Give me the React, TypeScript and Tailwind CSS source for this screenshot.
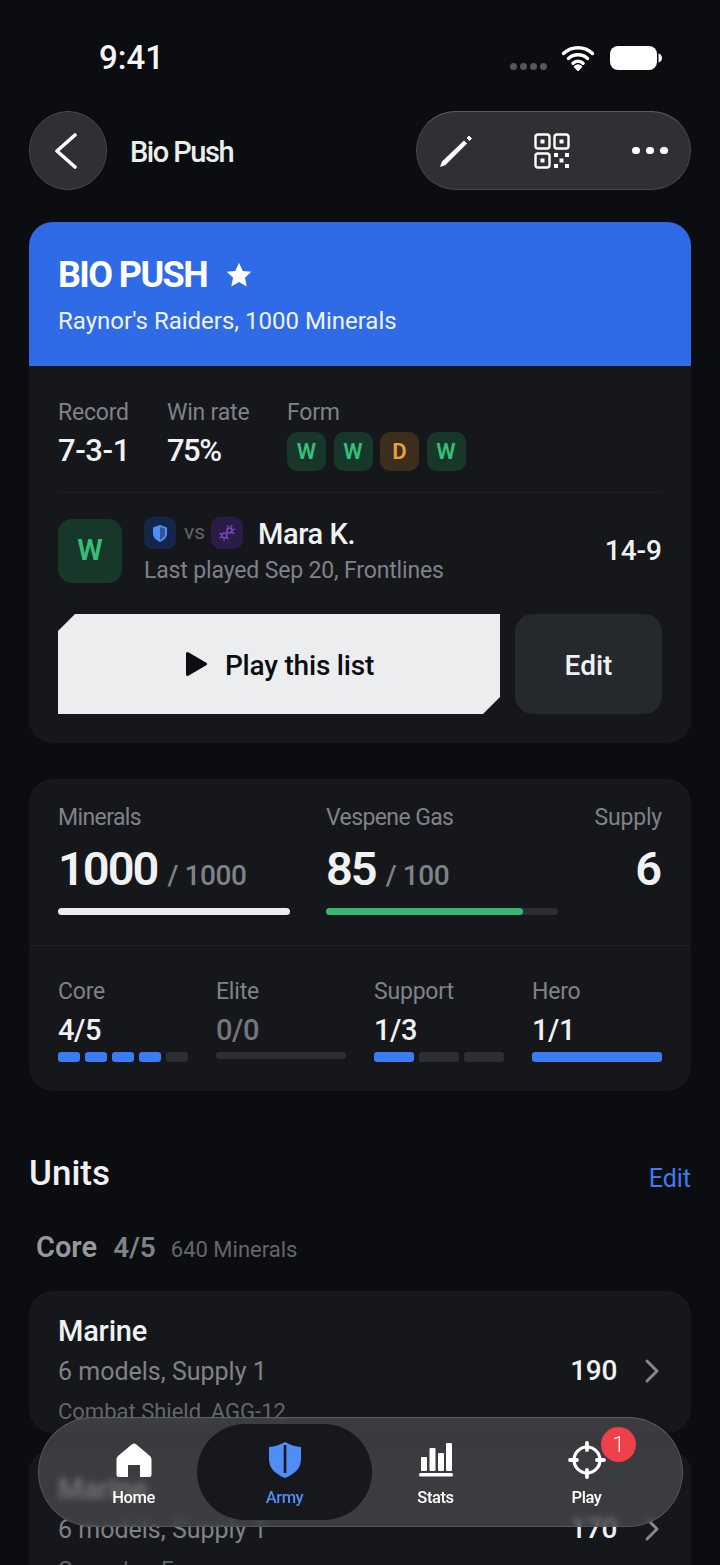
import { ChevronRight } from 'lucide-react';

const font = { fontFamily: 'Roboto, "Noto Sans", sans-serif' };

function Label({ children, className = '' }: { children: React.ReactNode; className?: string }) {
  return <div className={`text-[23px] leading-[28px] text-[#7f8288] ${className || 'tracking-[-0.2px]'}`}>{children}</div>;
}

function FormBadge({ result }: { result: 'W' | 'D' }) {
  const color = result === 'W' ? 'bg-[#17372b] text-[#35c078]' : 'bg-[#3b2e1c] text-[#e8a33d]';
  return (
    <div className={`flex h-[39px] w-[39px] items-center justify-center rounded-[10px] text-[22px] font-semibold ${color}`}>
      {result}
    </div>
  );
}

function Limit({ label, value, total, filled, muted }: { label: string; value: string; total: number; filled: number; muted?: boolean }) {
  return (
    <div className="w-[130px]">
      <Label>{label}</Label>
      <div className={`mt-[8px] text-[29px] leading-[32px] font-medium tracking-[-0.4px] ${muted ? 'text-[#73767c]' : 'text-[#f0f1f3]'}`}>{value}</div>
      {total === 0 ? (
        <div className="mt-[6px] h-[7px] rounded-[3px] bg-[#2c2e33]" />
      ) : (
        <div className="mt-[6px] flex h-[10px] gap-[4.5px]">
          {Array.from({ length: total }).map((_, i) => (
            <div key={i} className={`flex-1 rounded-[3px] ${i < filled ? 'bg-[#3b7bf6]' : 'bg-[#2c2e33]'}`} />
          ))}
        </div>
      )}
    </div>
  );
}

function UnitCard({ name, detail, gear, cost }: { name: string; detail: string; gear: string; cost: string }) {
  return (
    <div className="flex items-center justify-between rounded-[24px] bg-[#15171b] px-[29px] pt-[24px] pb-[5px]">
      <div>
        <div className="text-[29px] leading-[32px] font-medium tracking-[-0.2px] text-[#f0f1f3]">{name}</div>
        <div className="mt-[9px] text-[25px] leading-[32px] text-[#7f8288]">{detail}</div>
        <div className="mt-[8px] text-[22px] leading-[32px] text-[#63666c]">{gear}</div>
      </div>
      <div className="mb-[1px] flex items-center gap-[15px]">
        <span className="text-[28px] font-medium tracking-[-0.3px] text-[#f0f1f3]">{cost}</span>
        <ChevronRight size={40} strokeWidth={1.8} className="mr-[-10px] text-[#85888d]" />
      </div>
    </div>
  );
}

function NavItem({ label, active, children }: { label: string; active?: boolean; children: React.ReactNode }) {
  return (
    <div className={`flex w-[151px] flex-col items-center ${active ? 'text-[#4f8ef7]' : 'text-white'}`}>
      <div className="flex h-[40px] items-center justify-center">{children}</div>
      <span className="mt-[7px] text-[16.5px] leading-[22px] font-medium tracking-[-0.4px]">{label}</span>
    </div>
  );
}

export default function App() {
  return (
    <div style={font} className="relative h-[1565px] w-[720px] overflow-hidden bg-[#0c0d10] text-white">
      {/* status bar */}
      <div className="flex h-[111px] items-start justify-between pt-[40px] pr-[58px] pl-[99px]">
        <span className="text-[33px] leading-[36px] font-medium text-[#f5f5f5]">9:41</span>
        <div className="flex items-center pt-[4px]">
          <div className="mt-[16px] mr-[14px] flex gap-[3px]">
            {[0, 1, 2, 3].map((i) => (
              <div key={i} className="h-[7px] w-[7px] rounded-full bg-[#55575b]" />
            ))}
          </div>
          <svg width="34" height="28" viewBox="0 0 34 28" className="mr-[15px]">
            <path d="M2.500 9.500a21 21 0 0 1 29 0M7.500 14.500a14 14 0 0 1 19 0M12 19.200a7 7 0 0 1 10 0" fill="none" stroke="white" strokeWidth="3.400" strokeLinecap="round" />
            <path d="M17 27l-4-4.400a5.500 5.500 0 0 1 8 0z" fill="white" stroke="white" strokeLinejoin="round" />
          </svg>
          <svg width="52" height="24" viewBox="0 0 52 24">
            <rect x="0" y="0" width="47" height="24" rx="8" fill="white" />
            <path d="M48.500 7.500c2 .5 3.500 2.200 3.500 4.500s-1.500 4-3.500 4.500z" fill="white" />
          </svg>
        </div>
      </div>

      {/* top bar */}
      <div className="flex h-[79px] items-center justify-between px-[29px]">
        <div className="flex items-center gap-[23px]">
          <div className="flex h-[79px] w-[78px] items-center justify-center rounded-full border border-[#46484c] bg-[#2f3034]">
            <svg width="24" height="36" viewBox="0 0 24 36" fill="none" stroke="white" strokeWidth="3.600" strokeLinecap="round" strokeLinejoin="round" className="mr-[4px]">
              <path d="M21 2L3 18l18 16" />
            </svg>
          </div>
          <span className="pt-[2px] text-[29px] leading-[34px] font-medium tracking-[-1.5px] text-[#eceded]">Bio Push</span>
        </div>
        <div className="flex h-[79px] w-[275px] items-center rounded-full border border-[#46484c] border-t-[#5b5d60] bg-[#2f3034] pl-[22px]">
          <svg width="34" height="34" viewBox="0 0 34 34" fill="white">
            <path d="M1 33l2-5.500L25 6.500l3 3L6.500 31z" />
            <path d="M28 4l2-2 2.500 2.500-2 2z" stroke="white" strokeWidth="1" strokeLinejoin="round" />
          </svg>
          <svg width="36" height="36" viewBox="0 0 36 36" fill="none" stroke="white" strokeWidth="2.400" className="ml-[61px]">
            <rect x="1.500" y="1.500" width="14" height="14" rx="2.500" />
            <rect x="20.500" y="1.500" width="14" height="14" rx="2.500" />
            <rect x="1.500" y="20.500" width="14" height="14" rx="2.500" />
            <rect x="6.500" y="6.500" width="4" height="4" fill="white" stroke="none" />
            <rect x="25.500" y="6.500" width="4" height="4" fill="white" stroke="none" />
            <rect x="6.500" y="25.500" width="4" height="4" fill="white" stroke="none" />
            <path d="M20 20h4v4h-4zM31 20h4v4h-4zM25.500 25.500h4v4h-4zM20 31h4v4h-4zM31 31h4v4h-4z" fill="white" stroke="none" />
          </svg>
          <div className="ml-[62px] flex gap-[6.500px]">
            <div className="h-[7.500px] w-[7.500px] rounded-full bg-white" />
            <div className="h-[7.500px] w-[7.500px] rounded-full bg-white" />
            <div className="h-[7.500px] w-[7.500px] rounded-full bg-white" />
          </div>
        </div>
      </div>

      <div className="flex flex-col px-[29px] pt-[32px]">
        {/* list card */}
        <div className="overflow-hidden rounded-[24px] bg-[#15171b]">
          <div className="h-[144px] bg-[#2f6be6] px-[29px] pt-[30px]">
            <div className="flex items-center gap-[18px]">
              <span className="text-[36px] leading-[46px] font-bold tracking-[-1.600px]">BIO PUSH</span>
              <svg width="28" height="28" viewBox="0 0 24 24" fill="white"><path d="M12 1.500l3.200 7 7.300.8-5.400 5 1.500 7.500L12 18l-6.600 3.800 1.500-7.500-5.400-5 7.300-.8z" /></svg>
            </div>
            <div className="mt-[6px] text-[24px] leading-[34px] text-[#eef3fd]">Raynor's Raiders, 1000 Minerals</div>
          </div>
          <div className="px-[29px] pt-[33px] pb-[29px]">
            <div className="flex border-b border-[#1f2125] pb-[21px]">
              <div className="w-[109px]">
                <Label>Record</Label>
                <div className="mt-[7px] text-[31px] leading-[34px] font-medium tracking-[-0.4px] text-[#f0f1f3]">7-3-1</div>
              </div>
              <div className="w-[120px]">
                <Label>Win rate</Label>
                <div className="mt-[7px] text-[31px] leading-[34px] font-medium tracking-[-1.500px] text-[#f0f1f3]">75%</div>
              </div>
              <div>
                <Label>Form</Label>
                <div className="mt-[5px] flex gap-[7.500px]">
                  <FormBadge result="W" />
                  <FormBadge result="W" />
                  <FormBadge result="D" />
                  <FormBadge result="W" />
                </div>
              </div>
            </div>

            <div className="mt-[23px] flex items-center justify-between">
              <div className="flex items-center gap-[22px]">
                <div className="flex h-[64px] w-[64px] items-center justify-center rounded-[14px] bg-[#17372b] text-[29px] font-semibold text-[#35c078]">W</div>
                <div>
                  <div className="flex items-center">
                    <div className="flex h-[32px] w-[32px] items-center justify-center rounded-[9px] bg-[#16264a]">
                      <svg width="14" height="17" viewBox="0 0 14 17"><path d="M7 0l7 2.500v6c0 4-3 6.800-7 8.500-4-1.700-7-4.500-7-8.500v-6z" fill="#4f8ef7" /><path d="M7 2l5 1.800v4.700c0 3-2 5-5 6.500z" fill="#16264a" opacity=".55" /></svg>
                    </div>
                    <span className="ml-[8px] w-[27px] text-[21px] text-[#63666c]">vs</span>
                    <div className="flex h-[32px] w-[32px] items-center justify-center rounded-[9px] bg-[#2b1c47]">
                      <svg width="18" height="18" viewBox="0 0 18 18" fill="none" stroke="#7f48c4" strokeWidth="1.500"><circle cx="6.500" cy="11.500" r="2.500" /><circle cx="11.500" cy="6.500" r="2.500" /><path d="M1.500 9.500l2 1M1.500 14l2-1M6 15.500V17M10 15l-1-1.500M9.500 1.500l1 2M14 1l-1 2.500M16.500 5l-2 1M16.500 9.500l-2.500-1" /></svg>
                    </div>
                    <span className="relative top-px ml-[15px] text-[29px] leading-[34px] font-medium tracking-[-0.4px] text-[#f0f1f3]">Mara K.</span>
                  </div>
                  <div className="mt-[6px] text-[23px] leading-[30px] tracking-[-0.150px] text-[#7f8288]">Last played Sep 20, Frontlines</div>
                </div>
              </div>
              <span className="text-[28px] font-medium text-[#f0f1f3]">14-9</span>
            </div>

            <div className="mt-[28px] flex gap-[15px]">
              <div className="flex h-[100px] w-[442px] items-center justify-center gap-[17px] bg-[#ecedef] text-[#0c0d10] [clip-path:polygon(17px_0,100%_0,100%_83px,calc(100%-17px)_100%,0_100%,0_17px)]">
                <svg width="24" height="26" viewBox="0 0 24 26" fill="currentColor"><path d="M2 2.500a1.500 1.500 0 0 1 2.300-1.300l18 10.500a1.500 1.500 0 0 1 0 2.600l-18 10.500A1.500 1.500 0 0 1 2 23.500z" /></svg>
                <span className="pt-[3px] text-[28px] font-medium tracking-[-0.2px]">Play this list</span>
              </div>
              <div className="flex h-[100px] w-[147px] items-center justify-center rounded-[18px] bg-[#25282d] pt-[3px] text-[28px] font-medium text-[#f0f1f3]">Edit</div>
            </div>
          </div>
        </div>

        {/* resources card */}
        <div className="mt-[36px] rounded-[24px] bg-[#15171b] pb-[29px]">
          <div className="flex justify-between border-b border-[#1f2125] px-[29px] pt-[25px] pb-[30px]">
            <div className="w-[232px]">
              <Label className="tracking-[-0.6px]">Minerals</Label>
              <div className="mt-[9px] flex items-baseline gap-[10px] leading-[56px]">
                <span className="text-[47px] font-semibold tracking-[-2px] text-[#f0f1f3]">1000</span>
                <span className="text-[28px] font-medium tracking-[-0.4px] text-[#7f8288]">/ 1000</span>
              </div>
              <div className="mt-[4px] h-[7px] rounded-full bg-[#ecedef]" />
            </div>
            <div className="ml-[36px] w-[232px]">
              <Label className="tracking-[-0.6px]">Vespene Gas</Label>
              <div className="mt-[9px] flex items-baseline gap-[10px] leading-[56px]">
                <span className="text-[47px] font-semibold tracking-[-2px] text-[#f0f1f3]">85</span>
                <span className="text-[28px] font-medium tracking-[-0.4px] text-[#7f8288]">/ 100</span>
              </div>
              <div className="mt-[4px] h-[7px] rounded-full bg-[#2c2e33]">
                <div className="h-[7px] w-[85%] rounded-full bg-[#35b874]" />
              </div>
            </div>
            <div className="flex-1 text-right">
              <Label>Supply</Label>
              <div className="mt-[9px] text-[47px] leading-[56px] font-semibold text-[#f0f1f3]">6</div>
            </div>
          </div>
          <div className="flex justify-between px-[29px] pt-[32px]">
            <Limit label="Core" value="4/5" total={5} filled={4} />
            <Limit label="Elite" value="0/0" total={0} filled={0} muted />
            <Limit label="Support" value="1/3" total={3} filled={1} />
            <Limit label="Hero" value="1/1" total={1} filled={1} />
          </div>
        </div>

        {/* units */}
        <div className="mt-[61px] flex items-center justify-between">
          <span className="text-[35px] leading-[44px] font-medium text-[#f0f1f3]">Units</span>
          <span className="mt-[10px] text-[25px] leading-[30px] text-[#3b7bf6]">Edit</span>
        </div>
        <div className="mt-[31px] flex items-baseline pl-[7px]">
          <span className="text-[29px] leading-[34px] font-semibold text-[#95989d]">Core</span>
          <span className="ml-[16px] text-[28px] font-semibold text-[#7f8288]">4/5</span>
          <span className="ml-[15px] text-[22px] text-[#63666c]">640 Minerals</span>
        </div>
        <div className="mt-[22px] flex flex-col gap-[16px]">
          <UnitCard name="Marine" detail="6 models, Supply 1" gear="Combat Shield, AGG-12" cost="190" />
          <UnitCard name="Marine" detail="6 models, Supply 1" gear="Grenades, F" cost="170" />
        </div>
      </div>

      {/* bottom nav */}
      <div className="absolute top-[1417px] left-[38px] flex h-[110px] w-[645px] items-center rounded-[55px] border border-[#55575a] border-t-[#5f6164] bg-[#48494d]/75 pt-[5px] pl-[19px] backdrop-blur-[3px]">
        <div className="absolute top-[6px] left-[158px] h-[96px] w-[175px] rounded-[48px] bg-[#17181c]" />
        <div className="relative flex">
          <NavItem label="Home">
            <svg width="36" height="34" viewBox="0 0 36 34" fill="white">
              <path d="M18 .5q1 0 2 .8l14 11.700q1.500 1.300 1.500 3.500v15q0 2.500-2.500 2.500H24V22H12v12H3q-2.500 0-2.500-2.500v-15q0-2.200 1.500-3.500L16 1.300q1-.8 2-.8z" />
            </svg>
          </NavItem>
          <NavItem label="Army" active>
            <svg width="32" height="36" viewBox="0 0 32 36">
              <path d="M16 0q8 4.500 16 5v12c0 9-6 15-16 19C6 32 0 26 0 17V5q8-.5 16-5z" fill="#4f8ef7" />
              <rect x="14.700" y="3" width="2.600" height="28" fill="#17181c" />
            </svg>
          </NavItem>
          <NavItem label="Stats">
            <svg width="34" height="34" viewBox="0 0 34 34" fill="white">
              <rect x="2" y="14" width="6" height="14" rx="1" />
              <rect x="10.500" y="5" width="6" height="23" rx="1" />
              <rect x="19" y="10" width="6" height="18" rx="1" />
              <rect x="27" y="0" width="6" height="28" rx="1" />
              <rect x="0" y="30" width="34" height="3.500" rx="1.500" />
            </svg>
          </NavItem>
          <NavItem label="Play">
            <svg width="38" height="38" viewBox="0 0 38 38" fill="none" stroke="white">
              <circle cx="19" cy="19" r="13" strokeWidth="3.200" />
              <path d="M19 2v7M19 29v7M2 19h7M29 19h7" strokeWidth="3.800" strokeLinecap="round" />
            </svg>
          </NavItem>
        </div>
        <div className="absolute top-[9px] left-[562px] flex h-[35px] w-[35px] items-center justify-center rounded-full bg-[#f0404a] text-[22px] font-light text-white">1</div>
      </div>
    </div>
  );
}
